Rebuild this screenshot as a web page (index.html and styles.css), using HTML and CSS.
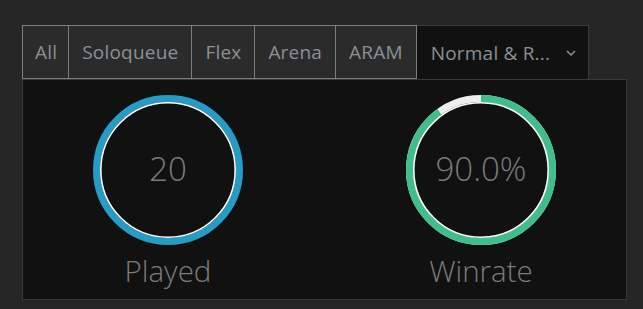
FILE: index.html
```html
<!DOCTYPE html>
<html lang="en">
<head>
  <meta charset="UTF-8">
  <meta name="viewport" content="width=device-width, initial-scale=1.0">
  <title>Queue stats</title>
  <link rel="stylesheet" href="styles.css">
</head>
<body>
  <div class="stats">
    <div class="tabs">
      <div class="tab">All</div>
      <div class="tab">Soloqueue</div>
      <div class="tab">Flex</div>
      <div class="tab">Arena</div>
      <div class="tab">ARAM</div>
      <div class="tab tab-active">
        <span class="tab-label">Normal &amp; R...</span>
        <svg class="chevron" width="10" height="6" viewBox="0 0 10 6">
          <path d="M1 1 L5 5 L9 1" fill="none" stroke="#8b9095" stroke-width="1.5"/>
        </svg>
      </div>
    </div>

    <div class="panel">
      <div class="stat">
        <div class="ring">
          <svg width="150" height="150" viewBox="0 0 150 150">
            <circle cx="75" cy="75" r="71.5" fill="none" stroke="#269bc5" stroke-width="7"/>
            <circle cx="75" cy="75" r="67.2" fill="none" stroke="#ffffff" stroke-width="1.6"/>
          </svg>
          <span class="ring-value">20</span>
        </div>
        <div class="stat-label">Played</div>
      </div>

      <div class="stat">
        <div class="ring">
          <svg width="150" height="150" viewBox="0 0 150 150">
            <circle cx="75" cy="75" r="71.5" fill="none" stroke="#eeeeee" stroke-width="7"/>
            <!-- 90% of the circumference, starting at the top -->
            <circle cx="75" cy="75" r="71.5" fill="none" stroke="#3dbe8b" stroke-width="7"
                    stroke-dasharray="404.3 449.2" transform="rotate(-90 75 75)"/>
            <circle cx="75" cy="75" r="67.2" fill="none" stroke="#ffffff" stroke-width="1.6"/>
          </svg>
          <span class="ring-value">90.0%</span>
        </div>
        <div class="stat-label">Winrate</div>
      </div>
    </div>
  </div>
</body>
</html>
```

FILE: styles.css
```css
body {
  margin: 0;
  background-color: #262626;
  font-family: "Open Sans", Arial, sans-serif;
}
.stats {
  margin: 25px 0 0 22px;
  width: 605px;
}
.tabs {
  display: flex;
}
.tab {
  display: flex;
  align-items: center;
  height: 52px;
  padding: 0 13px;
  margin-left: -1px;
  border: 1px solid #7d7d7d;
  background-color: #2b2b2b;
  color: #8b9095;
  font-size: 19px;
  letter-spacing: 0.2px;
}
.tab:first-child {
  margin-left: 0;
  padding: 0 11px 0 12px;
}
.tab-active {
  width: 145px;
  padding: 0 12px 0 14px;
  margin-left: 0;
  border-color: #3a3a3a;
  border-left: none;
  border-bottom: none;
  height: 53px;
  background-color: #111111;
}
.tab-label {
  flex: 1;
  white-space: nowrap;
}
.panel {
  display: flex;
  justify-content: center;
  gap: 163px;
  padding: 15px 0 9px;
  border: 1px solid #3a3a3a;
  background-color: #111111;
}
.stat {
  display: flex;
  flex-direction: column;
  align-items: center;
  gap: 6px;
}
.ring {
  position: relative;
  width: 150px;
  height: 150px;
}
.ring svg {
  display: block;
}
.ring-value {
  position: absolute;
  inset: 0 0 3px;
  display: flex;
  align-items: center;
  justify-content: center;
  color: #7a7a7a;
  font-size: 33px;
  font-weight: 300;
}
.stat-label {
  color: #7b7b7b;
  font-size: 29.5px;
  font-weight: 300;
  line-height: 39px;
}
```
